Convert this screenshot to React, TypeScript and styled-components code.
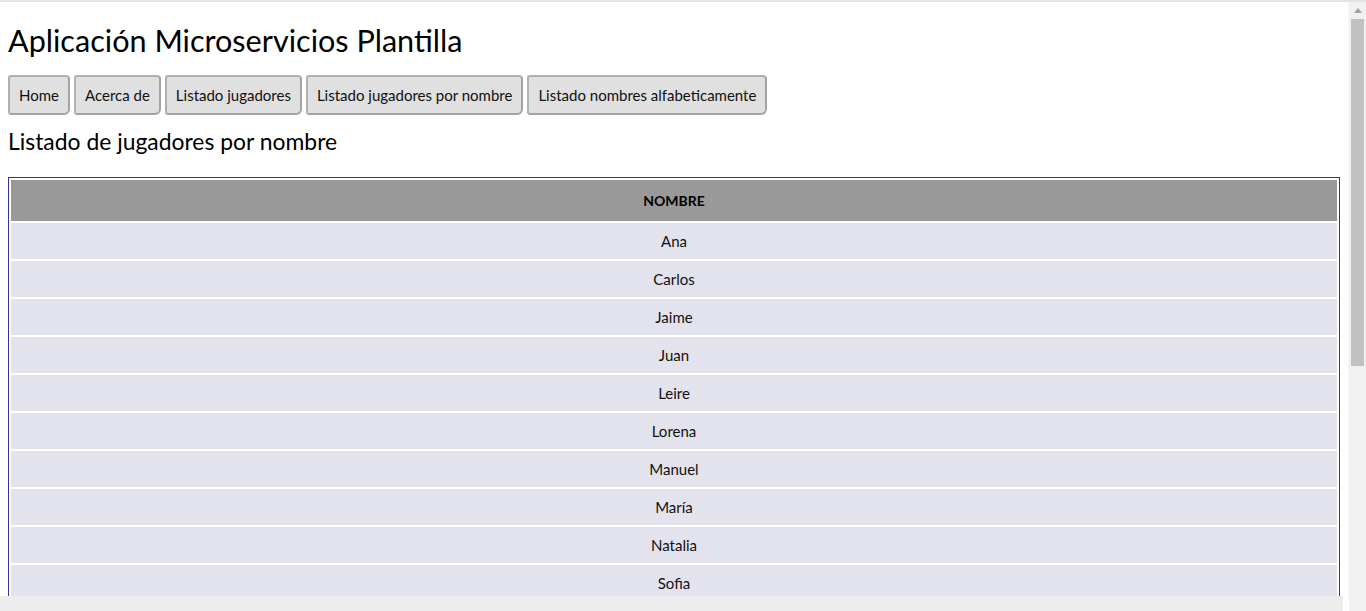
import React from "react";
import styled, { createGlobalStyle } from "styled-components";

const Global = createGlobalStyle`
  html, body { margin: 0; padding: 0; overflow: hidden; background: #fff; }
  body { font-family: Lato, "Noto Sans", sans-serif; color: #000; }
`;

const Page = styled.div`
  height: 611px;
  box-sizing: border-box;
  border-top: 2px solid #e2e2e2;
  display: grid;
  grid-template-columns: 1fr 17px;
  overflow: hidden;
`;

const LeftCol = styled.div`
  display: flex;
  flex-direction: column;
  min-width: 0;
  overflow: hidden;
`;

const Viewport = styled.div`
  flex: 1;
  overflow: hidden;
  padding: 0 8px;
  border-right: 1px solid #f6f6f6;
`;

const BottomBar = styled.div`
  height: 15px;
  flex: none;
  background: #ededed;
  margin-right: 6px;
`;

const ScrollTrack = styled.div`
  background: #f1f1f1;
  display: flex;
  flex-direction: column;
  align-items: center;
`;

const ArrowBtn = styled.div`
  height: 17px;
  width: 100%;
  display: flex;
  align-items: center;
  justify-content: center;
`;

const Thumb = styled.div`
  width: 13px;
  height: 347px;
  background: #c1c1c1;
`;

const Title = styled.h1`
  font-size: 30.6px;
  font-weight: 400;
  line-height: 36px;
  margin: 21px 0 16px;
`;

const Nav = styled.nav`
  display: flex;
  gap: 4px;
`;

const NavButton = styled.button`
  height: 40px;
  box-sizing: border-box;
  padding: 0 9px;
  font-family: inherit;
  font-size: 15px;
  color: #111;
  background: #e0e0e0;
  border: 2px solid #a3a3a3;
  border-top-color: #b0b0b0;
  border-left-color: #b0b0b0;
  border-radius: 3px 4px 6px 3px;
  cursor: pointer;
`;

const Subtitle = styled.h2`
  font-size: 22.9px;
  font-weight: 400;
  line-height: 28px;
  margin: 12px 0 22px;
`;

const Table = styled.table`
  width: 100%;
  border: 1px solid #333399;
  border-spacing: 2px;
`;

const HeadCell = styled.th`
  height: 41px;
  padding: 0;
  background: #999999;
  font-size: 14px;
  font-weight: 700;
  text-align: center;
`;

const Cell = styled.td`
  height: 36px;
  padding: 0;
  background: #e3e3ee;
  font-size: 15px;
  text-align: center;
  color: #111;
`;

const navItems = [
  "Home",
  "Acerca de",
  "Listado jugadores",
  "Listado jugadores por nombre",
  "Listado nombres alfabeticamente",
];

const names = [
  "Ana",
  "Carlos",
  "Jaime",
  "Juan",
  "Leire",
  "Lorena",
  "Manuel",
  "María",
  "Natalia",
  "Sofia",
];

export default function App() {
  return (
    <>
      <Global />
      <Page>
        <LeftCol>
          <Viewport>
            <Title>Aplicación Microservicios Plantilla</Title>
            <Nav>
              {navItems.map((n) => (
                <NavButton key={n}>{n}</NavButton>
              ))}
            </Nav>
            <Subtitle>Listado de jugadores por nombre</Subtitle>
            <Table>
              <thead>
                <tr>
                  <HeadCell>NOMBRE</HeadCell>
                </tr>
              </thead>
              <tbody>
                {names.map((n) => (
                  <tr key={n}>
                    <Cell>{n}</Cell>
                  </tr>
                ))}
              </tbody>
            </Table>
          </Viewport>
          <BottomBar />
        </LeftCol>
        <ScrollTrack>
          <ArrowBtn>
            <svg width="8" height="5" viewBox="0 0 8 5">
              <polygon points="0,5 4,0 8,5" fill="#a3a3a3" />
            </svg>
          </ArrowBtn>
          <Thumb />
        </ScrollTrack>
      </Page>
    </>
  );
}
